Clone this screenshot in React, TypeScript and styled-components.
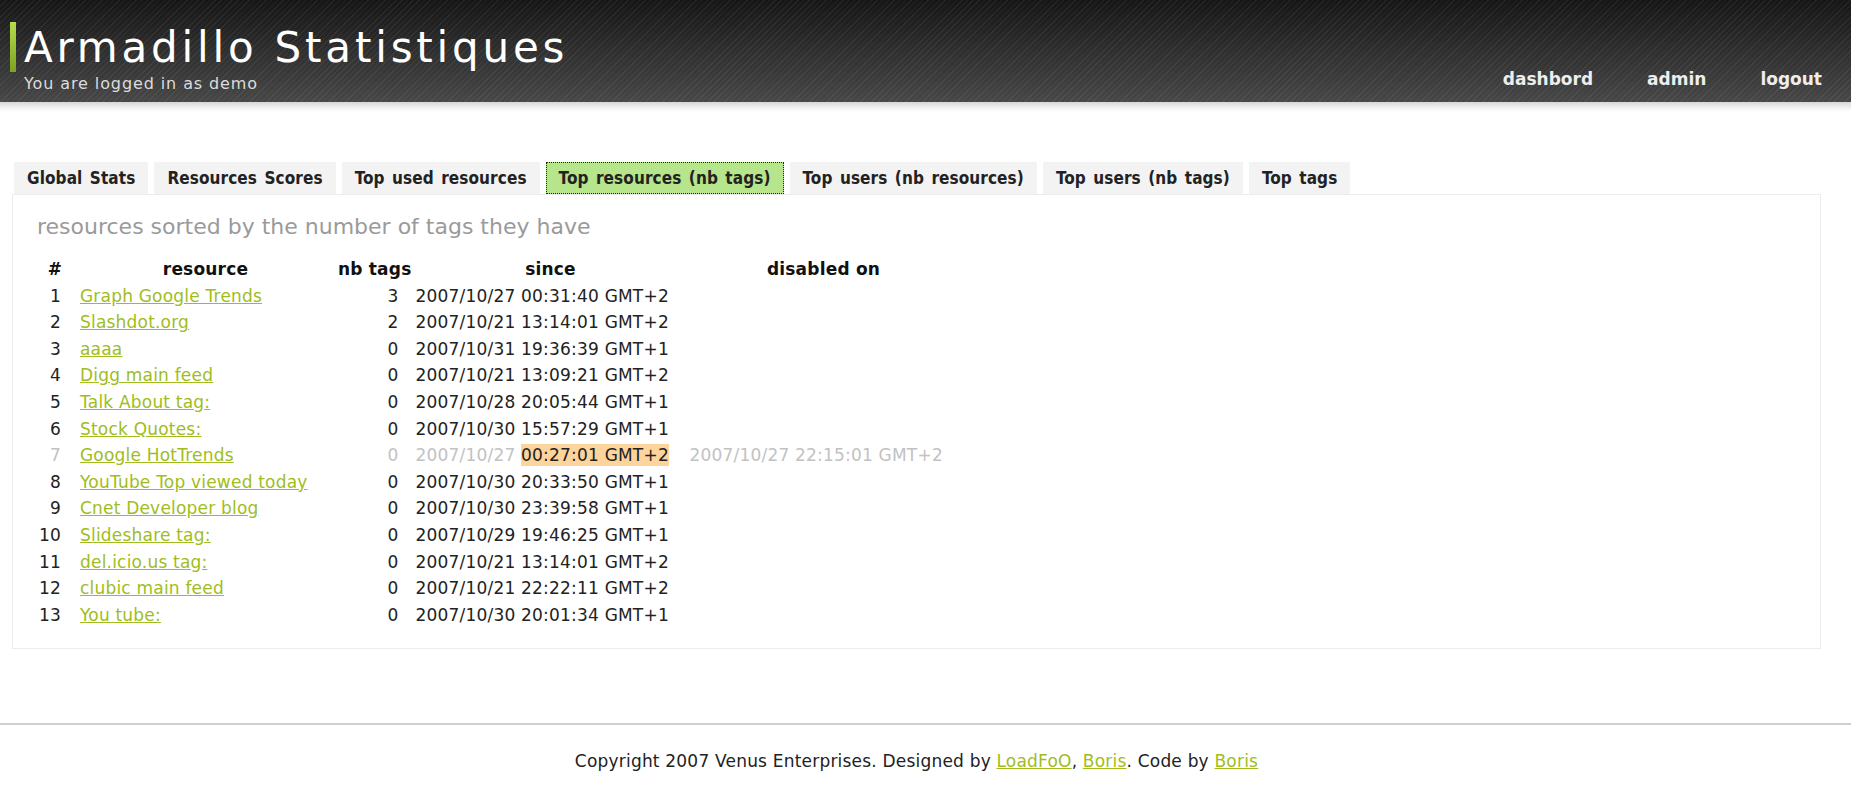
import * as React from "react";
import styled, { createGlobalStyle } from "styled-components";

const GlobalStyle = createGlobalStyle`
  body {
    margin: 0;
    background: #fff;
    font-family: "DejaVu Sans", Verdana, sans-serif;
    color: #222;
  }
`;

const SHeader = styled.div`
  height: 102px;
  display: flex;
  align-items: flex-start;
  justify-content: space-between;
  background: repeating-linear-gradient(
      135deg,
      rgba(255, 255, 255, 0.06) 0 1px,
      transparent 1px 4px
    ),
    linear-gradient(#161616, #474747);
`;

const SHeaderShade = styled.div`
  height: 10px;
  background: linear-gradient(#d6d6d6, #f6f6f6 70%, #fff);
`;

const SBrand = styled.div`
  display: flex;
  align-items: flex-start;
  padding: 22px 0 0 10px;
`;

const SBrandBar = styled.div`
  width: 6px;
  height: 50px;
  background: linear-gradient(#b6dc4c, #7da21e);
`;

const SBrandText = styled.div`
  padding-left: 8px;
`;

const STitle = styled.h1`
  margin: 0;
  font-size: 42px;
  font-weight: normal;
  line-height: 52px;
  letter-spacing: 3.8px;
  color: #fff;
`;

const SLogged = styled.div`
  font-size: 16px;
  line-height: 20px;
  letter-spacing: 0.9px;
  color: #dcdcdc;
`;

const SNav = styled.nav`
  display: flex;
  gap: 54px;
  padding: 67px 29px 0 0;
`;

const SNavLink = styled.a`
  font-size: 17px;
  font-weight: bold;
  line-height: 24px;
  color: #eee;
  text-decoration: none;
`;

const SMain = styled.div`
  margin: 50px 30px 0 12px;
`;

const STabs = styled.ul`
  display: flex;
  gap: 6px;
  margin: 0;
  padding: 0 0 0 2px;
  list-style: none;
`;

interface TabStyle {
  active: boolean;
}

const STab = styled.li<TabStyle>`
  height: 32px;
  box-sizing: border-box;
  padding: 0 12px;
  display: flex;
  align-items: center;
  font-family: "DejaVu Sans Condensed", "DejaVu Sans", sans-serif;
  font-stretch: condensed;
  font-weight: bold;
  font-size: 17px;
  letter-spacing: 0.1px;
  word-spacing: 2px;
  white-space: nowrap;
  color: #222;
  background: ${({ active }) => (active ? "#b7e58c" : "#f3f3f3")};
  border: 1px dotted ${({ active }) => (active ? "#222" : "transparent")};
`;

const SPanel = styled.div`
  border: 1px solid #ececec;
  padding: 19px 24px 20px;
`;

const SPanelTitle = styled.h2`
  margin: 0 0 16px;
  font-size: 22px;
  font-weight: normal;
  line-height: 26px;
  color: #9a9a9a;
`;

const STable = styled.table`
  border-collapse: collapse;
  table-layout: fixed;
  font-size: 17px;
  letter-spacing: 0.2px;

  th {
    font-weight: bold;
    text-align: center;
    white-space: nowrap;
    color: #111;
    padding: 0;
    line-height: 26.6px;
  }
  td {
    padding: 0;
    line-height: 26.6px;
    white-space: nowrap;
  }
  td:nth-child(1) {
    text-align: right;
    padding-right: 12px;
  }
  td:nth-child(2) {
    padding-left: 7px;
  }
  td:nth-child(3) {
    text-align: right;
    padding-right: 13px;
  }
  td:nth-child(4) {
    padding-left: 4px;
  }
`;

interface RowStyle {
  disabled: boolean;
}

const SRow = styled.tr<RowStyle>`
  color: ${({ disabled }) => (disabled ? "#c2c2c2" : "#222")};
`;

const SLink = styled.a`
  color: #9fbd20;
  text-decoration: underline;
`;

const SHighlight = styled.span`
  background: #fdd49b;
  color: #222;
  padding: 1px 0;
`;

const SFooter = styled.div`
  margin-top: 74px;
  border-top: 2px solid #d0d0d0;
  padding: 26px 18px 0 0;
  text-align: center;
  font-size: 17px;
  line-height: 20px;
  letter-spacing: 0.2px;
  color: #222;
`;

const tabs = [
  "Global Stats",
  "Resources Scores",
  "Top used resources",
  "Top resources (nb tags)",
  "Top users (nb resources)",
  "Top users (nb tags)",
  "Top tags",
];

interface Resource {
  name: string;
  tags: number;
  date: string;
  time: string;
  disabledOn?: string;
}

const resources: Resource[] = [
  { name: "Graph Google Trends", tags: 3, date: "2007/10/27", time: "00:31:40 GMT+2" },
  { name: "Slashdot.org", tags: 2, date: "2007/10/21", time: "13:14:01 GMT+2" },
  { name: "aaaa", tags: 0, date: "2007/10/31", time: "19:36:39 GMT+1" },
  { name: "Digg main feed", tags: 0, date: "2007/10/21", time: "13:09:21 GMT+2" },
  { name: "Talk About tag:", tags: 0, date: "2007/10/28", time: "20:05:44 GMT+1" },
  { name: "Stock Quotes:", tags: 0, date: "2007/10/30", time: "15:57:29 GMT+1" },
  {
    name: "Google HotTrends",
    tags: 0,
    date: "2007/10/27",
    time: "00:27:01 GMT+2",
    disabledOn: "2007/10/27 22:15:01 GMT+2",
  },
  { name: "YouTube Top viewed today", tags: 0, date: "2007/10/30", time: "20:33:50 GMT+1" },
  { name: "Cnet Developer blog", tags: 0, date: "2007/10/30", time: "23:39:58 GMT+1" },
  { name: "Slideshare tag:", tags: 0, date: "2007/10/29", time: "19:46:25 GMT+1" },
  { name: "del.icio.us tag:", tags: 0, date: "2007/10/21", time: "13:14:01 GMT+2" },
  { name: "clubic main feed", tags: 0, date: "2007/10/21", time: "22:22:11 GMT+2" },
  { name: "You tube:", tags: 0, date: "2007/10/30", time: "20:01:34 GMT+1" },
];

const App = () => {
  return (
    <>
      <GlobalStyle />
      <SHeader>
        <SBrand>
          <SBrandBar />
          <SBrandText>
            <STitle>Armadillo Statistiques</STitle>
            <SLogged>You are logged in as demo</SLogged>
          </SBrandText>
        </SBrand>
        <SNav>
          <SNavLink href="#">dashbord</SNavLink>
          <SNavLink href="#">admin</SNavLink>
          <SNavLink href="#">logout</SNavLink>
        </SNav>
      </SHeader>
      <SHeaderShade />
      <SMain>
        <STabs>
          {tabs.map((t, i) => (
            <STab key={t} active={i === 3}>
              {t}
            </STab>
          ))}
        </STabs>
        <SPanel>
          <SPanelTitle>resources sorted by the number of tags they have</SPanelTitle>
          <STable>
            <colgroup>
              <col style={{ width: 36 }} />
              <col style={{ width: 265 }} />
              <col style={{ width: 72 }} />
              <col style={{ width: 278 }} />
              <col style={{ width: 268 }} />
            </colgroup>
            <thead>
              <tr>
                <th>#</th>
                <th>resource</th>
                <th>nb tags</th>
                <th>since</th>
                <th>disabled on</th>
              </tr>
            </thead>
            <tbody>
              {resources.map((r, i) => {
                const disabled = !!r.disabledOn;
                return (
                  <SRow key={r.name} disabled={disabled}>
                    <td>{i + 1}</td>
                    <td>
                      <SLink href="#">{r.name}</SLink>
                    </td>
                    <td>{r.tags}</td>
                    <td>
                      {r.date}{" "}
                      {disabled ? <SHighlight>{r.time}</SHighlight> : r.time}
                    </td>
                    <td>{r.disabledOn}</td>
                  </SRow>
                );
              })}
            </tbody>
          </STable>
        </SPanel>
      </SMain>
      <SFooter>
        Copyright 2007 Venus Enterprises. Designed by <SLink href="#">LoadFoO</SLink>,{" "}
        <SLink href="#">Boris</SLink>. Code by <SLink href="#">Boris</SLink>
      </SFooter>
    </>
  );
};

export default App;
